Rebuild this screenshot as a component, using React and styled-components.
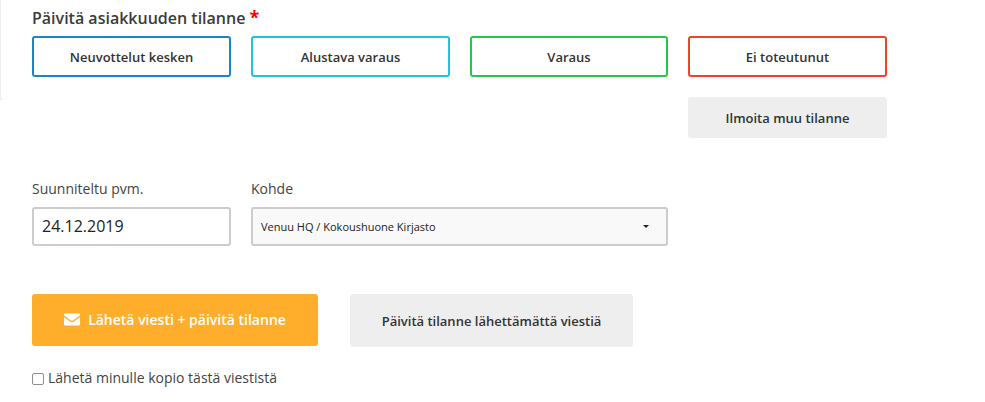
import React from "react";
import styled, { createGlobalStyle } from "styled-components";

const GlobalStyle = createGlobalStyle`
  html, body {
    margin: 0;
    padding: 0;
    background: #fff;
    font-family: "Open Sans", "Liberation Sans", sans-serif;
    color: #333;
  }
  * {
    box-sizing: border-box;
  }
`;

const statuses = [
  { label: "Neuvottelut kesken", color: "#1b85cb" },
  { label: "Alustava varaus", color: "#1ec4d9" },
  { label: "Varaus", color: "#26c84a" },
  { label: "Ei toteutunut", color: "#ef4526" },
];

const App = () => {
  return (
    <Page>
      <GlobalStyle />
      <Title>
        Päivitä asiakkuuden tilanne <Required>*</Required>
      </Title>

      <StatusGrid>
        {statuses.map((status) => (
          <StatusButton key={status.label} $color={status.color}>
            {status.label}
          </StatusButton>
        ))}
        <OtherStatusButton>Ilmoita muu tilanne</OtherStatusButton>
      </StatusGrid>

      <FieldRow>
        <Field>
          <FieldLabel>Suunniteltu pvm.</FieldLabel>
          <DateInput defaultValue="24.12.2019" />
        </Field>
        <Field>
          <FieldLabel>Kohde</FieldLabel>
          <SelectBox>
            <span>Venuu HQ / Kokoushuone Kirjasto</span>
            <Caret />
          </SelectBox>
        </Field>
      </FieldRow>

      <ActionRow>
        <SendButton>
          <svg width="16" height="13" viewBox="0 0 17 13" aria-hidden="true">
            <path
              fill="#fff"
              d="M1.4 0h14.2C16.4 0 17 .6 17 1.4c0 .6-.3 1.1-.8 1.4L9.5 7.5c-.6.4-1.4.4-2 0L.8 2.8C.3 2.5 0 2 0 1.4 0 .6.6 0 1.4 0zM0 4.1l6.9 4.7c1 .7 2.2.7 3.2 0L17 4.1v7.4c0 .8-.6 1.5-1.4 1.5H1.4C.6 13 0 12.3 0 11.5V4.1z"
            />
          </svg>
          Lähetä viesti + päivitä tilanne
        </SendButton>
        <UpdateButton>Päivitä tilanne lähettämättä viestiä</UpdateButton>
      </ActionRow>

      <CopyLabel>
        <CopyCheckbox type="checkbox" />
        Lähetä minulle kopio tästä viestistä
      </CopyLabel>
    </Page>
  );
};

const Page = styled.div`
  position: relative;
  width: 985px;
  height: 402px;
  overflow: hidden;
  padding: 8px 0 0 32px;

  ::before {
    content: "";
    position: absolute;
    left: 0;
    top: -4px;
    width: 2px;
    height: 103px;
    border-left: 1px solid #f0f0f0;
    border-bottom: 1px solid #f0f0f0;
    border-bottom-left-radius: 2px;
  }
`;

const Title = styled.div`
  font-size: 16px;
  line-height: 20px;
  font-weight: 600;
  color: #3b3b3b;
  height: 28px;
`;

const Required = styled.span`
  color: #f00;
  font-size: 18px;
  font-weight: 700;
  line-height: 16px;
`;

const StatusGrid = styled.div`
  display: grid;
  grid-template-columns: 199px 199px 198px 199px;
  grid-auto-rows: 41px;
  column-gap: 20px;
  row-gap: 20px;
  width: 855px;
`;

const BaseButton = styled.button`
  font-family: inherit;
  font-size: 13px;
  font-weight: 600;
  color: #333;
  border-radius: 3px;
  padding: 0;
  cursor: pointer;
`;

const StatusButton = styled(BaseButton)`
  background: #fff;
  border: 2px solid ${(props) => props.$color};
`;

const OtherStatusButton = styled(BaseButton)`
  grid-column: 4;
  background: #eee;
  border: none;
`;

const FieldRow = styled.div`
  display: flex;
  gap: 20px;
  margin-top: 41px;
`;

const Field = styled.div`
  display: flex;
  flex-direction: column;
`;

const FieldLabel = styled.label`
  font-size: 14px;
  line-height: 20px;
  color: #444;
  margin-bottom: 8px;
`;

const DateInput = styled.input`
  width: 199px;
  height: 39px;
  border: 2px solid #ccc;
  border-radius: 3px;
  padding: 0 8px 2px;
  font-family: inherit;
  font-size: 16px;
  color: #222;
  outline: none;
`;

const SelectBox = styled.div`
  width: 417px;
  height: 39px;
  border: 2px solid #ccc;
  border-radius: 3px;
  background: #f9f9f9;
  padding: 0 17px 0 8px;
  display: flex;
  align-items: center;
  justify-content: space-between;
  font-size: 11px;
  color: #222;
`;

const Caret = styled.span`
  width: 0;
  height: 0;
  border-left: 3px solid transparent;
  border-right: 3px solid transparent;
  border-top: 3px solid #222;
`;

const ActionRow = styled.div`
  display: flex;
  align-items: flex-start;
  gap: 32px;
  margin-top: 48px;
`;

const SendButton = styled(BaseButton)`
  width: 286px;
  height: 52px;
  background: #ffae2b;
  border: none;
  color: #fff;
  font-size: 14px;
  font-weight: 600;
  display: flex;
  align-items: center;
  justify-content: center;
  gap: 8px;
  padding-bottom: 1px;
`;

const UpdateButton = styled(BaseButton)`
  width: 283px;
  height: 53px;
  background: #eee;
  border: none;
`;

const CopyLabel = styled.label`
  display: flex;
  align-items: center;
  gap: 4px;
  margin-top: 21px;
  font-size: 14px;
  line-height: 20px;
  color: #444;
`;

const CopyCheckbox = styled.input`
  appearance: none;
  width: 12px;
  height: 12px;
  margin: 2px 0 0;
  background: #fff;
  border: 1px solid #8f8f8f;
  border-radius: 2px;
`;

export default App;
